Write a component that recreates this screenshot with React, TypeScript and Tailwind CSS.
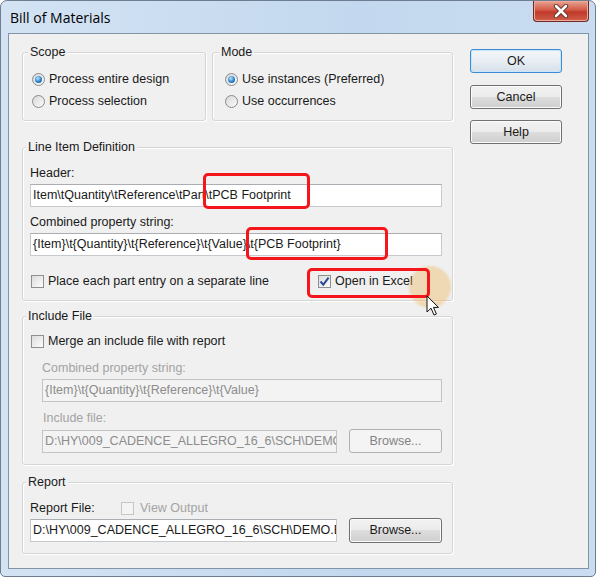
import type { ReactNode } from "react";

function GroupBox({ title, className, labelClass = "left-[3px]", children }: { title: string; className: string; labelClass?: string; children?: ReactNode }) {
  return (
    <div className={`relative border border-[#d5d5d5] rounded-[3px] shadow-[inset_1px_1px_0_#ffffff,1px_1px_0_#ffffff] ${className}`}>
      <span className={`absolute top-[-9px] px-[2px] bg-[#f0f0f0] leading-[16px] ${labelClass}`}>{title}</span>
      {children}
    </div>
  );
}

function Radio({ checked, label }: { checked?: boolean; label: string }) {
  return (
    <div className="flex items-center gap-[4px] h-[16px] leading-[16px]">
      <span className="w-[13px] h-[13px] rounded-full border border-[#8a8a8a] bg-gradient-to-br from-[#d8d8d8] to-[#fbfbfb] flex items-center justify-center shrink-0">
        {checked && (
          <span className="w-[7px] h-[7px] rounded-full bg-[radial-gradient(circle_at_40%_35%,#b9e8ff,#2c7fc9_55%,#174a86)]" />
        )}
      </span>
      <span>{label}</span>
    </div>
  );
}

function Check({ checked, disabled, label }: { checked?: boolean; disabled?: boolean; label: string }) {
  return (
    <div className={`flex items-center gap-[4px] h-[16px] leading-[16px] ${disabled ? "text-[#a3a3a3]" : ""}`}>
      <span
        className={`w-[13px] h-[13px] border flex items-center justify-center shrink-0 ${
          disabled ? "border-[#c6c6c6] bg-[#f4f4f4]" : "border-[#8e8f8f] bg-gradient-to-br from-[#dcdcdc] to-[#fdfdfd]"
        }`}
      >
        {checked && (
          <svg width="11" height="11" viewBox="0 0 11 11">
            <path d="M1.5 5.5 L4.3 8.6 L9.6 1.6" fill="none" stroke="#2a4a94" strokeWidth="2" />
          </svg>
        )}
      </span>
      <span className={disabled ? "ml-[2px]" : ""}>{label}</span>
    </div>
  );
}

function Field({ text, className, disabled }: { text: string; className: string; disabled?: boolean }) {
  return (
    <div
      className={`h-[23px] border pl-[2px] leading-[21px] whitespace-nowrap overflow-hidden ${
        disabled ? "border-[#c4c4c4] bg-[#f3f3f3] text-[#8c8c8c]" : "border-[#c6c9ce] border-t-[#abadb3] bg-white"
      } ${className}`}
    >
      {text}
    </div>
  );
}

function Button({ label, className = "", primary, disabled }: { label: string; className?: string; primary?: boolean; disabled?: boolean }) {
  const look = disabled
    ? "border-[#adb2b5] bg-[#f4f4f4] text-[#838383]"
    : primary
      ? "border-[#3c8ad4] bg-gradient-to-b from-[#f2f6fa] via-[#e8eef4] to-[#d6dfe8] shadow-[inset_0_0_0_1px_#c9e6fb]"
      : "border-[#707070] bg-[linear-gradient(#f2f2f2,#ebebeb_50%,#dddddd_50%,#cfcfcf)] shadow-[inset_0_0_0_1px_#fbfbfb]";
  return (
    <div className={`w-[92px] rounded-[3px] border flex items-center justify-center ${look} ${className}`}>
      {label}
    </div>
  );
}

export default function App() {
  return (
    <div className="relative w-[598px] h-[579px] bg-white overflow-hidden font-['Liberation_Sans',Arial,sans-serif] text-[12.5px] text-[#1a1a1a]">
      <div className="w-[596px] h-[577px] rounded-t-[7px] rounded-b-[5px] border border-[#6e7d8f] bg-[linear-gradient(90deg,#d3e3f4,#c3d8ee_60%,#c9dcf1)] flex flex-col">
        {/* title bar */}
        <div className="h-[32px] flex items-start justify-between">
          <span className="pl-[9px] pt-[7px] font-['Open_Sans',sans-serif] text-[14px] leading-[20px] text-black">Bill of Materials</span>
          <div className="mr-[6px] w-[56px] h-[21px] rounded-b-[4px] border border-t-0 border-[#6d2b22] bg-[linear-gradient(#e8a594,#d35a44_45%,#c0382a_55%,#d0604a)] shadow-[inset_0_0_0_1px_#eda99a] flex items-center justify-center">
            <svg width="16" height="14" viewBox="0 0 16 14">
              <path d="M3 2 L13 12 M13 2 L3 12" stroke="#5a2a24" strokeWidth="4.4" strokeLinecap="round" />
              <path d="M3 2 L13 12 M13 2 L3 12" stroke="#ffffff" strokeWidth="2.6" strokeLinecap="round" />
            </svg>
          </div>
        </div>

        {/* client area */}
        <div className="ml-[7px] w-[581px] h-[536px] border border-[#8494a7] bg-[#f0f0f0] flex pl-[13px] pt-[15px]">
          <div className="w-[431px] pt-[3px] flex flex-col">
            <div className="flex gap-[6px]">
              <GroupBox title="Scope" className="w-[184px] h-[69px] pl-[9px] pt-[18px]" labelClass="left-[5px]">
                <div className="flex flex-col gap-[6px]">
                  <Radio checked label="Process entire design" />
                  <Radio label="Process selection" />
                </div>
              </GroupBox>
              <GroupBox title="Mode" className="w-[241px] h-[69px] pl-[12px] pt-[18px]" labelClass="left-[6px]">
                <div className="flex flex-col gap-[6px]">
                  <Radio checked label="Use instances (Preferred)" />
                  <Radio label="Use occurrences" />
                </div>
              </GroupBox>
            </div>

            <GroupBox title="Line Item Definition" className="mt-[26px] h-[154px] pl-[7px] pt-[17px]">
              <div className="leading-[16px]">Header:</div>
              <Field className="mt-[3px] w-[412px]" text={"Item\\tQuantity\\tReference\\tPart\\tPCB Footprint"} />
              <div className="mt-[7px] leading-[16px]">Combined property string:</div>
              <Field
                className="mt-[3px] w-[412px]"
                text={"{Item}\\t{Quantity}\\t{Reference}\\t{Value}\\t{PCB Footprint}"}
              />
              <div className="mt-[17px] flex pl-[1px]">
                <div className="w-[287px]">
                  <Check label="Place each part entry on a separate line" />
                </div>
                <Check checked label="Open in Excel" />
              </div>
            </GroupBox>

            <GroupBox title="Include File" className="mt-[15px] h-[149px] pl-[8px] pt-[16px]">
              <Check label="Merge an include file with report" />
              <div className="mt-[11px] ml-[11px] leading-[16px] text-[#a3a3a3]">Combined property string:</div>
              <Field disabled className="mt-[3px] ml-[11px] w-[400px]" text={"{Item}\\t{Quantity}\\t{Reference}\\t{Value}"} />
              <div className="mt-[8px] ml-[12px] leading-[16px] text-[#a3a3a3]">Include file:</div>
              <div className="mt-[3px] ml-[11px] flex items-start">
                <Field disabled className="mt-[1px] w-[295px]" text={"D:\\HY\\009_CADENCE_ALLEGRO_16_6\\SCH\\DEMO.INC"} />
                <Button disabled label="Browse..." className="ml-[12px] w-[93px] h-[24px]" />
              </div>
            </GroupBox>

            <GroupBox title="Report" className="mt-[17px] h-[72px] pl-[7px] pt-[17px]">
              <div className="flex items-center h-[16px] leading-[16px]">
                <span className="w-[91px]">Report File:</span>
                <Check disabled label="View Output" />
              </div>
              <div className="mt-[2px] flex items-start">
                <Field className="mt-[1px] w-[307px]" text={"D:\\HY\\009_CADENCE_ALLEGRO_16_6\\SCH\\DEMO.BOM"} />
                <Button label="Browse..." className="ml-[12px] w-[93px] h-[25px]" />
              </div>
            </GroupBox>
          </div>

          <div className="ml-[17px] flex flex-col">
            <Button primary label="OK" className="h-[24px]" />
            <Button label="Cancel" className="mt-[12px] h-[24px]" />
            <Button label="Help" className="mt-[11px] h-[24px]" />
          </div>
        </div>
      </div>

      {/* screen-recording highlight and annotations */}
      <div className="absolute left-[409px] top-[266px] w-[42px] h-[42px] rounded-full bg-[rgba(236,176,82,0.38)] blur-[1px]" />
      <div className="absolute left-[203px] top-[173px] w-[107px] h-[36px] border-[3px] border-[#f5161c] rounded-[5px]" />
      <div className="absolute left-[246px] top-[227px] w-[142px] h-[33px] border-[3px] border-[#f5161c] rounded-[5px]" />
      <div className="absolute left-[307px] top-[268px] w-[123px] h-[30px] border-[3px] border-[#f5161c] rounded-[5px]" />
      <svg className="absolute left-[426px] top-[295px]" width="14" height="22" viewBox="0 0 14 22">
        <path d="M1 1 L1 17 L5 13.2 L8 20 L10.4 19 L7.5 12.4 L12.5 12.4 Z" fill="#ffffff" stroke="#111111" strokeWidth="1" strokeLinejoin="round" />
      </svg>
    </div>
  );
}
